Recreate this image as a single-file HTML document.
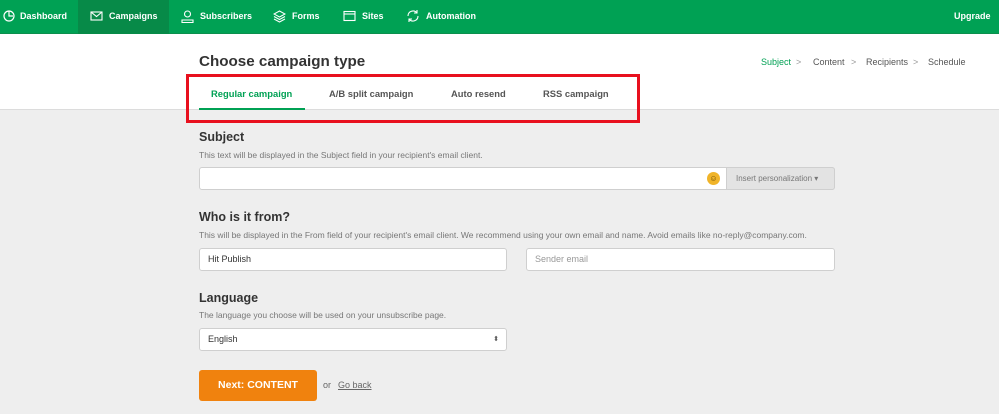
<!DOCTYPE html>
<html><head><meta charset="utf-8"><style>
*{box-sizing:border-box;margin:0;padding:0}
body{width:999px;height:414px;overflow:hidden;background:#eeeeee;font-family:"Liberation Sans",sans-serif;position:relative;color:#333}
.nav{position:absolute;left:0;top:0;width:999px;height:34px;background:#00a154;border-bottom:1px solid #0c8f4d}
.nav .it{position:absolute;top:0;height:34px;line-height:33px;color:#fff;font-size:9px;font-weight:bold}
.nav .act{background:#078a48}
.nav svg{position:absolute;top:10px;left:0}
.hdr{position:absolute;left:0;top:34px;width:999px;height:76px;background:#fff;border-bottom:1px solid #dcdcdc}
.abs{position:absolute;white-space:nowrap}
h1{position:absolute;left:199px;top:53px;font-size:15.2px;font-weight:bold;color:#333}
.tab{position:absolute;top:88px;font-size:9.4px;font-weight:bold;color:#555}
.crumb{position:absolute;top:57px;font-size:9px;color:#555}
.h2{position:absolute;left:199px;font-size:12.5px;font-weight:bold;color:#333}
.d{position:absolute;left:199px;font-size:8.5px;color:#777}
.inp{position:absolute;background:#fff;border:1px solid #cfcfcf;border-radius:3px;height:23px;font-size:9px;color:#333;line-height:21px;padding-left:8px}
</style></head><body>
<div class="nav">
 <div class="it" style="left:3px;width:75px;padding-left:17px"><svg width="12" height="12" viewBox="0 0 12 12"><circle cx="6" cy="6" r="5" fill="none" stroke="#fff" stroke-width="1.2"/><path d="M6 1v5h4" fill="none" stroke="#fff" stroke-width="1.2"/></svg>Dashboard</div>
 <div class="it act" style="left:78px;width:91px;padding-left:31px"><svg width="13" height="12" viewBox="0 0 13 12" style="left:12px"><rect x="1" y="2" width="11" height="8" fill="none" stroke="#fff" stroke-width="1.1"/><path d="M1 2l5.5 4.5L12 2" fill="none" stroke="#fff" stroke-width="1.1"/></svg>Campaigns</div>
 <div class="it" style="left:181px;padding-left:19px"><svg width="13" height="13" viewBox="0 0 13 13"><circle cx="6.5" cy="4" r="3" fill="none" stroke="#fff" stroke-width="1.1"/><path d="M1 12.5v-2.5h11v2.5z" fill="none" stroke="#fff" stroke-width="1.1"/></svg>Subscribers</div>
 <div class="it" style="left:273px;padding-left:19px"><svg width="13" height="13" viewBox="0 0 13 13"><path d="M6.5 1L12 4 6.5 7 1 4z M1 6.5l5.5 3 5.5-3 M1 9l5.5 3 5.5-3" fill="none" stroke="#fff" stroke-width="1"/></svg>Forms</div>
 <div class="it" style="left:343px;padding-left:19px"><svg width="13" height="12" viewBox="0 0 13 12"><rect x="1" y="1.5" width="11" height="9" fill="none" stroke="#fff" stroke-width="1.1"/><path d="M1 4h11" stroke="#fff" stroke-width="1.1"/></svg>Sites</div>
 <div class="it" style="left:406px;padding-left:20px"><svg width="14" height="14" viewBox="0 0 14 14" style="top:9px"><path d="M2 7a5 5 0 0 1 9-3M12 7a5 5 0 0 1-9 3" fill="none" stroke="#fff" stroke-width="1.1"/><path d="M11 1v3h-3M3 13v-3h3" fill="none" stroke="#fff" stroke-width="1.1"/></svg>Automation</div>
 <div class="it" style="left:954px">Upgrade</div>
</div>
<div class="hdr"></div>
<h1>Choose campaign type</h1>
<div class="crumb" style="left:761px;color:#00a154">Subject</div>
<div class="crumb" style="left:796px;color:#999">&gt;</div>
<div class="crumb" style="left:813px">Content</div>
<div class="crumb" style="left:851px;color:#999">&gt;</div>
<div class="crumb" style="left:866px">Recipients</div>
<div class="crumb" style="left:913px;color:#999">&gt;</div>
<div class="crumb" style="left:928px">Schedule</div>
<div class="tab" style="left:211px;color:#00a154">Regular campaign</div>
<div class="abs" style="left:199px;top:108px;width:106px;height:2px;background:#00a154"></div>
<div class="tab" style="left:329px">A/B split campaign</div>
<div class="tab" style="left:451px">Auto resend</div>
<div class="tab" style="left:543px">RSS campaign</div>
<div class="abs" style="left:186px;top:74px;width:454px;height:49px;border:3px solid #e8101e"></div>

<div class="h2" style="top:130px">Subject</div>
<div class="d" style="top:150px">This text will be displayed in the Subject field in your recipient's email client.</div>
<div class="inp" style="left:199px;top:167px;width:636px"></div>
<div class="abs" style="left:707px;top:172px;width:13px;height:13px;border-radius:50%;background:#f0b429;font-size:8px;line-height:13px;text-align:center;color:#6b4a00">☺</div>
<div class="abs" style="left:726px;top:167px;width:109px;height:23px;background:#e3e3e3;border:1px solid #cfcfcf;border-radius:0 3px 3px 0;font-size:8px;color:#777;line-height:21px;padding-left:9px">Insert personalization ▾</div>

<div class="h2" style="top:210px">Who is it from?</div>
<div class="d" style="top:230px">This will be displayed in the From field of your recipient's email client. We recommend using your own email and name. Avoid emails like no-reply@company.com.</div>
<div class="inp" style="left:199px;top:248px;width:308px">Hit Publish</div>
<div class="inp" style="left:526px;top:248px;width:309px;color:#999">Sender email</div>

<div class="h2" style="top:291px">Language</div>
<div class="d" style="top:310px">The language you choose will be used on your unsubscribe page.</div>
<div class="inp" style="left:199px;top:328px;width:308px">English<span style="position:absolute;right:7px;top:0;font-size:7px;color:#555">⬍</span></div>

<div class="abs" style="left:199px;top:370px;width:118px;height:31px;background:#f0820e;border-radius:3px;color:#fff;font-weight:bold;font-size:10.5px;line-height:31px;text-align:center">Next: CONTENT</div>
<div class="abs" style="left:323px;top:380px;font-size:9px;color:#666">or</div>
<div class="abs" style="left:338px;top:380px;font-size:9px;color:#666;text-decoration:underline">Go back</div>
</body></html>
